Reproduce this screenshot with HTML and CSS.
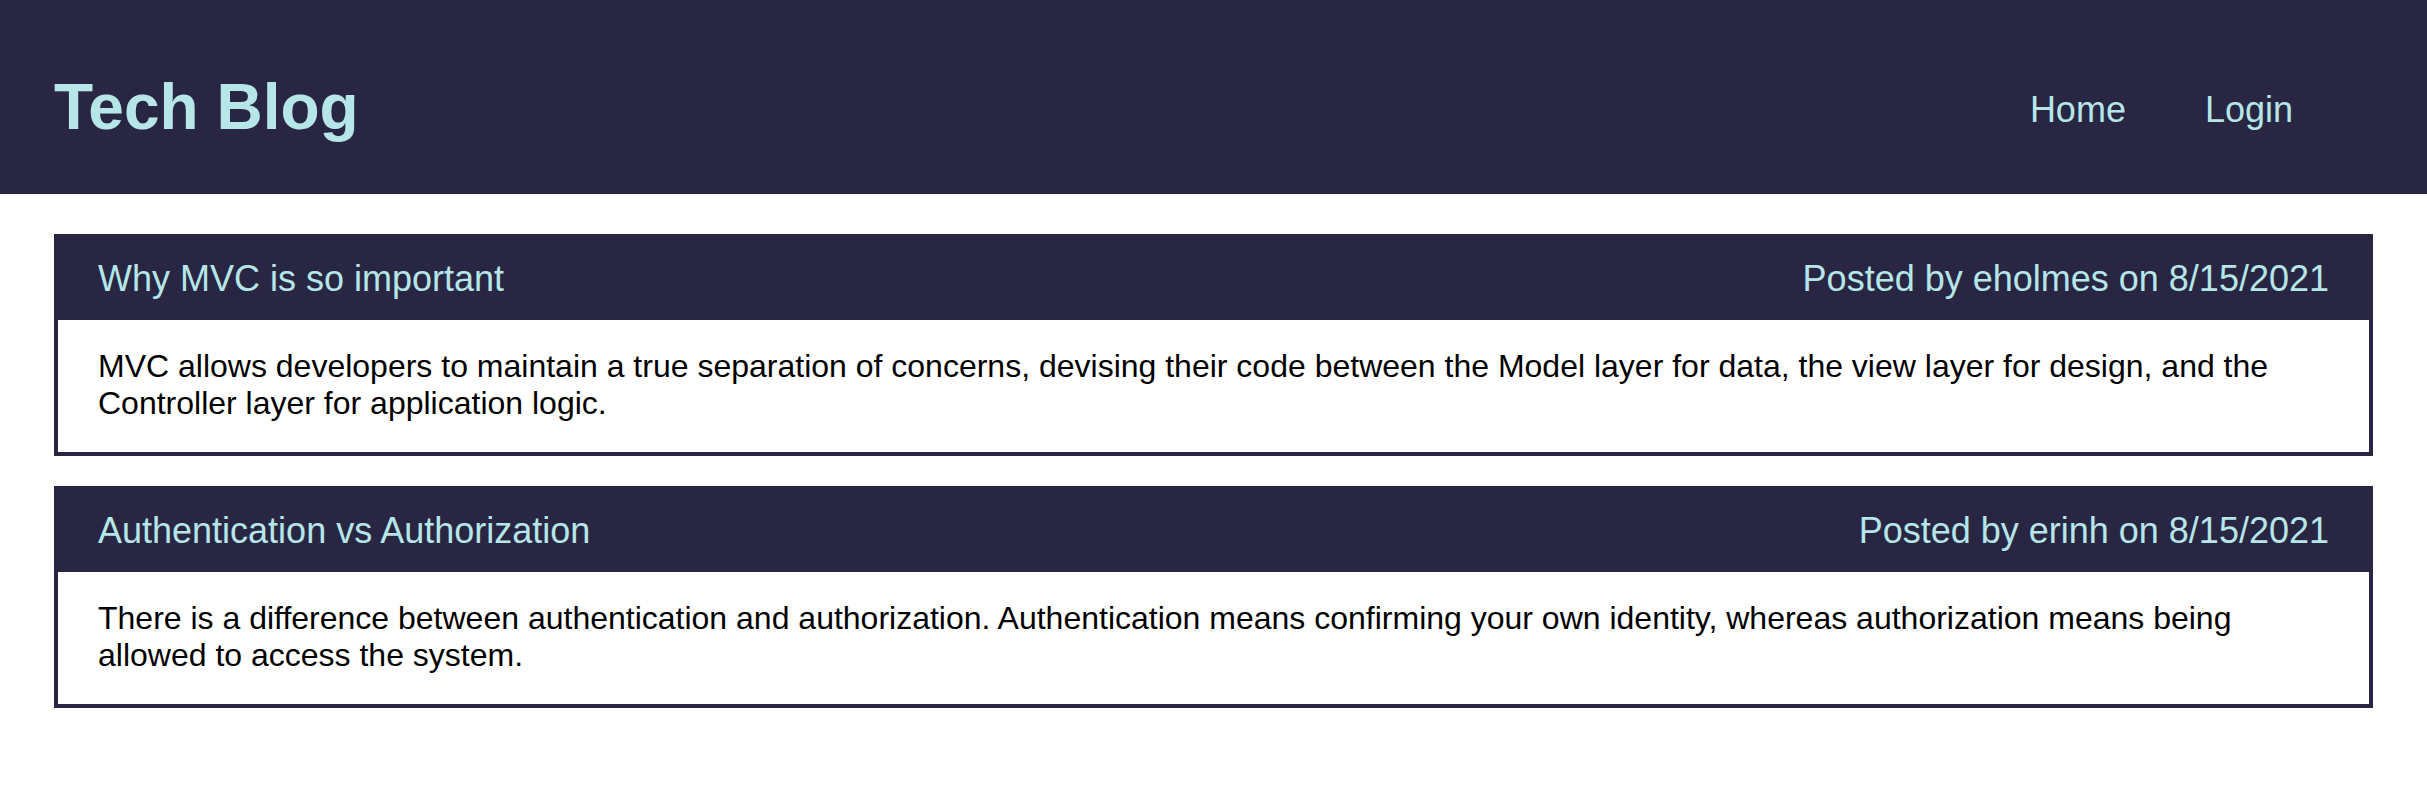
FILE: index.html
```html
<!DOCTYPE html>
<html lang="en">
<head>
<meta charset="utf-8">
<title>Tech Blog</title>
<link rel="stylesheet" href="styles.css">
</head>
<body>
<header class="site-header">
  <h1 class="brand">Tech Blog</h1>
  <nav class="nav">
    <a class="nav-link" href="#">Home</a>
    <a class="nav-link" href="#">Login</a>
  </nav>
</header>
<main class="posts">
  <article class="post">
    <div class="post-head">
      <span class="post-title">Why MVC is so important</span>
      <span class="post-meta">Posted by eholmes on 8/15/2021</span>
    </div>
    <div class="post-body">MVC allows developers to maintain a true separation of concerns, devising their code between the Model layer for data, the view layer for design, and the Controller layer for application logic.</div>
  </article>
  <article class="post">
    <div class="post-head">
      <span class="post-title">Authentication vs Authorization</span>
      <span class="post-meta">Posted by erinh on 8/15/2021</span>
    </div>
    <div class="post-body">There is a difference between authentication and authorization. Authentication means confirming your own identity, whereas authorization means being allowed to access the system.</div>
  </article>
</main>
</body>
</html>
```
FILE: styles.css
```css
* { box-sizing: border-box; }
html, body {
  margin: 0;
  padding: 0;
  background: #ffffff;
  font-family: "Liberation Sans", Arial, Helvetica, sans-serif;
  color: #000000;
}
.site-header {
  height: 194px;
  background: #292643;
  display: flex;
  justify-content: space-between;
  align-items: flex-start;
  padding: 70px 134px 0 54px;
}
.brand {
  margin: 0;
  font-size: 64px;
  font-weight: 700;
  line-height: normal;
  color: #b6e6e8;
}
.nav {
  display: flex;
  gap: 79px;
  margin-top: 19px;
}
.nav-link {
  font-size: 36px;
  line-height: normal;
  color: #b6e6e8;
  text-decoration: none;
}
.posts {
  display: flex;
  flex-direction: column;
  gap: 30px;
  padding: 40px 54px;
}
.post {
  border: 4px solid #292643;
}
.post-head {
  background: #292643;
  display: flex;
  justify-content: space-between;
  align-items: center;
  padding: 20px 40px 20px 40px;
  color: #b6e6e8;
  font-size: 36px;
  line-height: normal;
}
.post-body {
  padding: 28px 40px 30px;
  font-size: 32px;
  line-height: normal;
}
```
